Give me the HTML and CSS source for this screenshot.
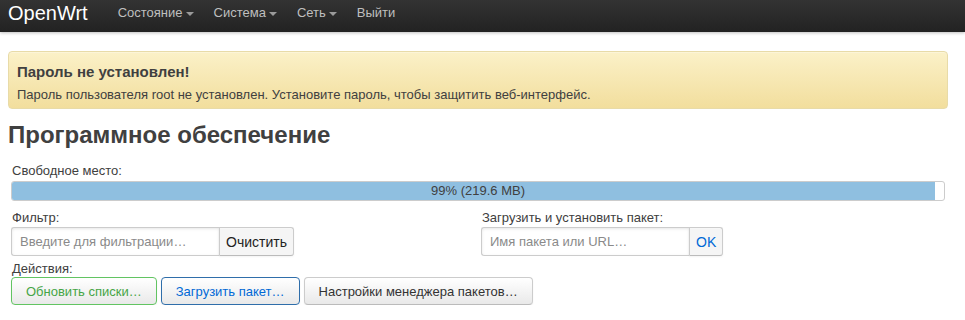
FILE: index.html
```html
<!DOCTYPE html>
<html lang="ru">
<head>
<meta charset="utf-8">
<link rel="stylesheet" href="styles.css">
</head>
<body>
<header class="navbar">
  <a class="brand">OpenWrt</a>
  <ul class="nav">
    <li><a>Состояние <span class="caret"></span></a></li>
    <li><a>Система <span class="caret"></span></a></li>
    <li><a>Сеть <span class="caret"></span></a></li>
    <li><a>Выйти</a></li>
  </ul>
</header>
<main class="container">
  <div class="alert">
    <h4>Пароль не установлен!</h4>
    <p>Пароль пользователя root не установлен. Установите пароль, чтобы защитить веб-интерфейс.</p>
  </div>
  <h2 class="title">Программное обеспечение</h2>
  <div class="section">
    <div class="label">Свободное место:</div>
    <div class="progress">
      <div class="fill" style="width:99%"></div>
      <span class="ptext">99% (219.6 MB)</span>
    </div>
  </div>
  <div class="cols">
    <div class="col">
      <div class="label">Фильтр:</div>
      <div class="group">
        <input class="input" type="text" placeholder="Введите для фильтрации…">
        <button class="btn addon">Очистить</button>
      </div>
    </div>
    <div class="col">
      <div class="label">Загрузить и установить пакет:</div>
      <div class="group">
        <input class="input" type="text" placeholder="Имя пакета или URL…">
        <button class="btn addon ok">OK</button>
      </div>
    </div>
  </div>
  <div class="section">
    <div class="label">Действия:</div>
    <div class="actions">
      <button class="btn green">Обновить списки…</button>
      <button class="btn blue">Загрузить пакет…</button>
      <button class="btn">Настройки менеджера пакетов…</button>
    </div>
  </div>
</main>
</body>
</html>
```
FILE: styles.css
```css
* { box-sizing: border-box; }
html, body { margin: 0; padding: 0; background: #fff; }
body {
  font-family: "Liberation Sans", Arial, sans-serif;
  font-size: 13px;
  color: #404040;
}
.navbar {
  height: 32px;
  background: linear-gradient(to bottom, #333 0%, #222 100%);
  box-shadow: 0 1px 3px rgba(0,0,0,0.25);
  display: flex;
  align-items: flex-start;
  padding-left: 8px;
}
.brand {
  font-size: 20px;
  color: #fff;
  margin-right: 20px;
  line-height: 26px;
}
.nav { list-style: none; margin: 0; padding: 0; display: flex; }
.nav a {
  color: #bfbfbf;
  font-size: 13px;
  padding: 0 10px;
  line-height: 26px;
  display: inline-flex;
  align-items: center;
}
.caret {
  display: inline-block;
  width: 0; height: 0;
  border-left: 4px solid transparent;
  border-right: 4px solid transparent;
  border-top: 4px solid #9a9a9a;
  margin-left: 3px;
  margin-top: 1px;
}
.container { width: 940px; margin-left: 8px; }
.alert {
  margin-top: 19px;
  height: 58px;
  border: 1px solid #e8dba8;
  border-radius: 4px;
  background: linear-gradient(to bottom, #fbf1c8 0%, #f2de9d 100%);
  box-shadow: inset 0 1px 0 rgba(255,255,255,0.3);
  padding: 11px 8px 0;
}
.alert h4 {
  margin: 0;
  font-size: 15px;
  font-weight: bold;
  line-height: 18px;
}
.alert p { margin: 5px 0 0; line-height: 18px; }
.title {
  margin: 11px 0 0;
  font-size: 24px;
  font-weight: bold;
  line-height: 30px;
}
.section { padding: 0 3px; }
.label { line-height: 18px; padding-left: 1px; }
.title + .section { margin-top: 12px; }
.progress {
  position: relative;
  margin-top: 1px;
  height: 20px;
  border: 1px solid #ccc;
  border-radius: 3px;
  background: #fff;
  overflow: hidden;
}
.fill { height: 100%; background: #8fbfe0; }
.ptext {
  position: absolute;
  left: 0; right: 0; top: 0;
  text-align: center;
  line-height: 18px;
  color: #404040;
}
.cols { display: flex; margin-top: 8px; }
.col { width: 50%; padding: 0 3px; }
.group { display: flex; margin-top: 0; }
.input {
  width: 208px;
  height: 29px;
  border: 1px solid #ccc;
  border-right: none;
  border-radius: 3px 0 0 3px;
  padding: 0 8px;
  font-family: "Liberation Sans", Arial, sans-serif;
  font-size: 13px;
  color: #404040;
  box-shadow: inset 0 1px 3px rgba(0,0,0,0.1);
  outline: none;
}
.input::placeholder { color: #8a8a8a; }
.btn {
  font-family: "Liberation Sans", Arial, sans-serif;
  font-size: 13px;
  color: #333;
  height: 28px;
  padding: 0 14px;
  border: 1px solid #ccc;
  border-bottom-color: #bbb;
  border-radius: 4px;
  background: linear-gradient(to bottom, #fff 0%, #e9e9e9 100%);
  box-shadow: inset 0 1px 0 rgba(255,255,255,0.2), 0 1px 2px rgba(0,0,0,0.05);
}
.btn.addon {
  height: 29px;
  border-radius: 0 3px 3px 0;
  padding: 0 6px;
  font-size: 14px;
  color: #222;
  background: #f5f5f5;
}
.btn.addon.ok { color: #0069d6; padding: 0 6px; }
.cols + .section { margin-top: 4px; }
.actions { display: flex; gap: 4px; margin-top: -1px; }
.btn.green { color: #46a546; border-color: #62c462; }
.btn.blue { color: #0069d6; border-color: #2f6eaa; }
```
